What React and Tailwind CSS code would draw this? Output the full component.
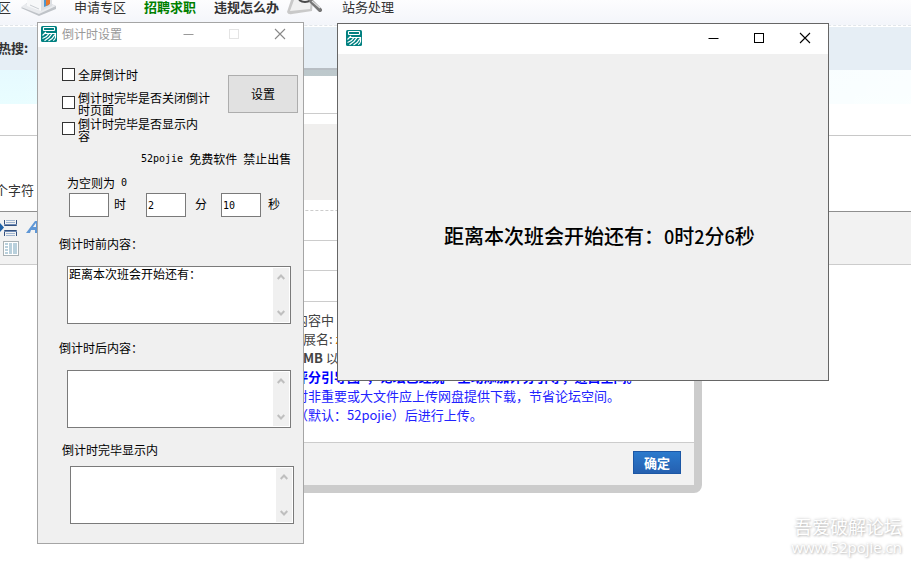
import React from "react";

function AppIcon() {
  return (
    <svg className="size-4 shrink-0" viewBox="0 0 16 16" aria-hidden="true">
      <rect width="16" height="16" rx="1.5" fill="#008080" />
      <g fill="none" stroke="#fff">
        <rect x="2.5" y="1.5" width="11" height="3" rx="0.5" strokeWidth="1.1" />
        <path d="M5 6L1.500 9.500M4 7.500H14.500V11.500Q14 14 12 14.500" strokeWidth="1.2" />
        <path d="M8 7.500Q6 11 1.500 12.500M11 7.500Q8.500 12 3.500 14.800M14 8.500Q12 12.500 7.500 15" strokeWidth="1.3" />
      </g>
    </svg>
  );
}

function WindowControls({ min, max, close }) {
  const cell = "flex h-full w-[46px] items-center justify-center pb-[2px]";
  const glyph = "size-[10px] overflow-visible";
  return (
    <div className="ml-auto flex h-full">
      <button type="button" aria-label="最小化" className={`${cell} ${min}`}>
        <svg className={glyph} viewBox="0 0 10 10" fill="none" stroke="currentColor">
          <path d="M0.500 5.500H10.500" />
        </svg>
      </button>
      <button type="button" aria-label="最大化" className={`${cell} ${max}`}>
        <svg className={glyph} viewBox="0 0 10 10" fill="none" stroke="currentColor">
          <rect x="0.5" y="0.5" width="9" height="9" />
        </svg>
      </button>
      <button type="button" aria-label="关闭" className={`${cell} ${close}`}>
        <svg className={glyph} viewBox="0 0 10 10" fill="none" stroke="currentColor" strokeWidth="1.1">
          <path d="M0 0L10 10M10 0L0 10" />
        </svg>
      </button>
    </div>
  );
}

function HouseIcon() {
  return (
    <svg className="h-4 w-10" viewBox="0 0 40 16" aria-hidden="true">
      <path d="M2 8L20 16L37 9V6L30 3H8Z" fill="#bfc3c8" />
      <path d="M2 7L20 14L37 6L30 3L8 3Z" fill="#e9ebee" />
      <path d="M8 0V6L22 11V0Z" fill="#f7f8f9" />
      <path d="M22 0V11L33 6V0Z" fill="#dcdfe3" />
      <path d="M11 5L20 9" stroke="#c9cdd2" />
      <path d="M25 0H30V5L25 7Z" fill="#4d96cf" />
      <path d="M27 0H31V4L27 6Z" fill="#e8782c" />
    </svg>
  );
}

function MagnifierIcon() {
  return (
    <svg className="h-4 w-9" viewBox="0 0 36 16" aria-hidden="true">
      <path d="M4 0L0 12Q1 15 5 14L25 11L26 0Z" fill="#c9c9c9" />
      <path d="M7 0L3 11L23 9L24 0Z" fill="#f1f1f1" />
      <path d="M12 0Q18 4 24 0" fill="none" stroke="#4a4a4a" strokeWidth="2" />
      <path d="M24 1L33 10" stroke="#777" strokeWidth="4" strokeLinecap="round" />
      <path d="M25 1L33 8" stroke="#ddd" strokeWidth="1.3" />
    </svg>
  );
}

function EditorIcons() {
  return (
    <svg className="h-[52px] w-10" viewBox="0 0 40 52" aria-hidden="true">
      <path d="M0 11L4 15.500L0 20Z" fill="#1f62a8" />
      <g fill="none" stroke="#33507e">
        <path d="M4.500 8V13.500H16.500V8M4.500 24V18.500H16.500V24" />
      </g>
      <path d="M4 12.500H17M4 19.500H17" stroke="#6f8bb5" />
      <path d="M6 8.500H15M6 10.500H15M6 21.500H15M6 23.500H15" stroke="#9fb4cf" />
      <path d="M26 21L35 9H40V21H35V18H31L30 21Z" fill="#5f97d6" />
      <path d="M33 15H36V11Z" fill="#f2f2f2" />
      <rect x="3.5" y="29.5" width="15" height="14" fill="#fff" stroke="#aab2b5" />
      <path d="M5 31H8V33H5ZM5 34H8V36H5ZM5 37H8V39H5ZM5 40H8V42H5ZM9 31H12V42H9ZM13 31H17V42H13Z" fill="#b9d0dc" />
    </svg>
  );
}

function ForumPage() {
  return (
    <div className="text-[13px] text-[#333]">
      <nav className="flex h-[26px] items-start border-b border-dashed border-[#e2e6ea] bg-linear-to-b from-[#fdfdfe] to-[#f3f5fa] leading-[14px] whitespace-nowrap">
        <a href="#zone" className="-ml-[2px]">区</a>
        <span className="ml-2"><HouseIcon /></span>
        <a href="#apply" className="ml-[15px]">申请专区</a>
        <a href="#jobs" className="ml-[18px] font-bold text-[#008000]">招聘求职</a>
        <a href="#rules" className="ml-[18px] font-bold">违规怎么办</a>
        <span className="ml-2"><MagnifierIcon /></span>
        <a href="#admin" className="ml-[19px]">站务处理</a>
      </nav>
      <div className="mt-px flex h-[43px] items-center bg-[#e6eef5] pb-[2px] font-bold">
        <span className="-ml-[2px]">热搜:</span>
      </div>
      <div className="h-[34px] bg-linear-to-b from-[#e6faff] to-[#e9fdff]">
        <div className="h-full bg-linear-to-r from-transparent to-white/80" />
      </div>
      <div className="mt-[31px] flex h-[77px] items-end border-y border-t-[#c8c8c8] border-b-[#8f8f8f]">
        <span className="mb-[11px] -ml-[5px] leading-5">个字符</span>
      </div>
      <div className="h-[53px] border-b border-[#ccc] bg-[#f2f2f2]">
        <EditorIcons />
      </div>
    </div>
  );
}

function UploadDialog() {
  return (
    <section className="absolute top-[68px] left-[62px] w-[640px] rounded-lg border-8 border-black/20 text-[13px] text-[#444]">
      <div className="bg-white">
        <div className="h-[38px] border-b border-[#ccc]" />
        <div className="mt-[10px] h-[76px] bg-[#f0efee]" />
        <div className="h-[11px] border-b border-dashed border-[#ccc]" />
        <div className="h-[30px] border-b border-[#ccc]" />
        <div className="h-[30px] border-b border-[#ccc]" />
        <div className="h-[31px] border-b border-[#ccc]" />
        <div className="h-[141px] border-b border-[#ccc] pt-2 pl-[225px] leading-[19px] whitespace-nowrap">
          <p>内容中</p>
          <p className="pl-2">展名: <span className="text-[#e60]">z</span></p>
          <p className="pl-2"><b>MB</b> 以</p>
          <p className="font-bold text-[#00f]">评分引导图”，论坛已经统一主动添加评分引导，进白空间。</p>
          <p className="text-[#22f]">时非重要或大文件应上传网盘提供下载，节省论坛空间。</p>
          <p className="text-[#22f]">（默认：52pojie）后进行上传。</p>
        </div>
        <div className="flex h-[42px] items-center justify-end bg-[#f2f2f2] pr-[13px]">
          <button type="button" className="mb-[3px] h-[23px] w-12 border border-[#1c57a5] bg-linear-to-b from-[#2b7acd] to-[#2560b0] leading-5 font-bold text-white">
            确定
          </button>
        </div>
      </div>
    </section>
  );
}

function ScrollTextarea({ id, value, className }) {
  return (
    <div className={`flex h-[58px] w-[224px] border border-[#7a7a7a] bg-white p-px ${className}`}>
      <textarea id={id} defaultValue={value} className="min-w-0 flex-1 resize-none overflow-hidden leading-[12px] outline-none" />
      <div className="flex w-4 flex-col items-center justify-between bg-[#f0f0f0] py-[6px]">
        <svg className="h-[7px] w-2" viewBox="0 0 8 7" fill="none" stroke="#bfbfbf" strokeWidth="2">
          <path d="M0.700 5L4 1.500L7.300 5" />
        </svg>
        <svg className="h-[7px] w-2" viewBox="0 0 8 7" fill="none" stroke="#bfbfbf" strokeWidth="2">
          <path d="M0.700 2L4 5.500L7.300 2" />
        </svg>
      </div>
    </div>
  );
}

const box = "mt-1 size-[13px] shrink-0 appearance-none border border-[#333] bg-white";
const field = "h-6 w-10 border border-[#7a7a7a] bg-white px-px font-['DejaVu_Sans_Mono',monospace] text-[10px] outline-none";

function SettingsWindow() {
  return (
    <section className="absolute top-[22px] left-[37px] w-[267px] border border-[#a5a5a5] bg-[#f0f0f0] text-[12px] leading-4 text-black">
      <header className="flex h-6 items-center bg-white pl-[3px]">
        <span className="mb-[2px]"><AppIcon /></span>
        <h2 className="mb-[2px] ml-[5px] text-[#999]">倒计时设置</h2>
        <WindowControls min="text-[#999]" max="text-[#e4e4e4]" close="text-[#888]" />
      </header>
      <form className="flex flex-col pb-[19px] pl-[21px]">
        <div className="flex items-start pt-[17px]">
          <div className="ml-[3px] w-[166px] leading-[12px]">
            <label className="flex items-start gap-[3px]">
              <input type="checkbox" className={box} />
              <span className="mt-[5px]">全屏倒计时</span>
            </label>
            <label className="mt-[11px] flex items-start gap-[3px]">
              <input type="checkbox" className={box} />
              <span className="w-[132px]">倒计时完毕是否关闭倒计时页面</span>
            </label>
            <label className="mt-[2px] flex items-start gap-[3px]">
              <input type="checkbox" className={box} />
              <span className="w-[120px]">倒计时完毕是否显示内容</span>
            </label>
          </div>
          <button type="button" className="mt-[11px] h-[38px] w-[70px] border border-[#adadad] bg-[#e1e1e1]">设置</button>
        </div>
        <p className="mt-[9px] flex gap-[6px] pl-[82px]">
          <span className="font-['DejaVu_Sans_Mono',monospace] text-[10px]">52pojie</span>
          <span>免费软件</span>
          <span>禁止出售</span>
        </p>
        <p className="mt-2 flex gap-[6px] pl-2">
          <span>为空则为</span>
          <span className="font-['DejaVu_Sans_Mono',monospace] text-[10px]">0</span>
        </p>
        <div className="mt-[2px] flex items-center pl-[10px]">
          <input id="hours" className={field} />
          <label htmlFor="hours" className="mb-[2px] ml-[5px]">时</label>
          <input id="minutes" defaultValue="2" className={`ml-5 ${field}`} />
          <label htmlFor="minutes" className="mb-[2px] ml-[9px]">分</label>
          <input id="seconds" defaultValue="10" className={`ml-[14px] ${field}`} />
          <label htmlFor="seconds" className="mb-[2px] ml-[7px]">秒</label>
        </div>
        <label htmlFor="before" className="mt-[19px]">倒计时前内容：</label>
        <ScrollTextarea id="before" value="距离本次班会开始还有：" className="mt-[14px] ml-2" />
        <label htmlFor="after" className="mt-4">倒计时后内容：</label>
        <ScrollTextarea id="after" value="" className="mt-[14px] ml-2" />
        <label htmlFor="done" className="mt-[14px] ml-[3px]">倒计时完毕显示内</label>
        <ScrollTextarea id="done" value="" className="mt-2 ml-[11px]" />
      </form>
    </section>
  );
}

function CountdownWindow() {
  return (
    <section className="absolute top-[23px] left-[337px] h-[358px] w-[492px] border border-[#666] bg-[#f0f0f0] text-black">
      <header className="flex h-[30px] items-center bg-white pl-2">
        <span className="mb-[2px]"><AppIcon /></span>
        <WindowControls min="text-black" max="text-black" close="text-black" />
      </header>
      <p className="pt-[167px] pl-[106px] text-[20px] leading-[30px] font-medium whitespace-nowrap">
        距离本次班会开始还有：<span className="text-[18px]">0</span>时<span className="text-[18px]">2</span>分<span className="text-[18px]">6</span>秒
      </p>
    </section>
  );
}

export default function App() {
  return (
    <main className="relative min-h-screen overflow-hidden bg-white font-['Noto_Sans_CJK_SC',sans-serif]">
      <ForumPage />
      <UploadDialog />
      <SettingsWindow />
      <CountdownWindow />
      <div className="absolute right-[9px] bottom-[7px] text-right text-white [text-shadow:0_0_3px_#bbb,1px_1px_2px_#ccc]">
        <p className="text-[18px] leading-[21px]">吾爱破解论坛</p>
        <p className="font-['Open_Sans',sans-serif] text-[15px] leading-[21px]">www.52pojie.cn</p>
      </div>
    </main>
  );
}
